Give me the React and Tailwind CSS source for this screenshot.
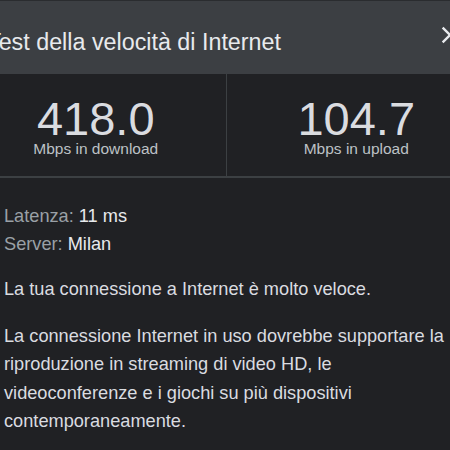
import React from "react";

const stats = [
  { value: "418.0", label: "Mbps in download" },
  { value: "104.7", label: "Mbps in upload" },
];

const CloseIcon = () => (
  <svg width="28" height="28" viewBox="0 0 24 24" fill="currentColor">
    <path d="M19 6.41L17.59 5 12 10.59 6.41 5 5 6.41 10.59 12 5 17.59 6.41 19 12 13.41 17.59 19 19 17.59 13.41 12z" />
  </svg>
);

const App = () => {
  return (
    <div
      className="w-[450px] h-[450px] overflow-hidden bg-[#202124]"
      style={{ fontFamily: '"Liberation Sans", Arial, sans-serif' }}
    >
      <div className="w-[520px] ml-[-34px]">
        {/* header */}
        <div className="h-[74px] flex justify-between bg-[#3c3f43] border-t border-[#2a2c2f] pl-[21px] pr-[22px]">
          <h1 className="mt-[27px] text-[23.3px] leading-[28px] text-[#e8eaed]">
            Test della velocità di Internet
          </h1>
          <div className="mt-[20px] text-[#e8eaed]">
            <CloseIcon />
          </div>
        </div>

        {/* results */}
        <div className="flex h-[104px] border-b-2 border-[#3c4043]">
          {stats.map((stat, index) => (
            <React.Fragment key={stat.label}>
              {index > 0 && <div className="w-px bg-[#3c4043]" />}
              <div className="flex-1 flex flex-col items-center pt-[24px]">
                <div className="text-[47px] leading-[42px] text-[#dadce0]">
                  {stat.value}
                </div>
                <div className="text-[15.5px] leading-[18px] text-[#bdc1c6]">
                  {stat.label}
                </div>
              </div>
            </React.Fragment>
          ))}
        </div>

        {/* details */}
        <div className="pl-[38px] pr-[38px] pt-[24px] text-[18.2px] leading-[28px] text-[#dadce0]">
          <div>
            <span className="text-[#9aa0a6]">Latenza: </span>
            <span className="text-[#e8eaed]">11 ms</span>
          </div>
          <div>
            <span className="text-[#9aa0a6]">Server: </span>
            <span className="text-[#e8eaed]">Milan</span>
          </div>
          <p className="mt-[17px]">
            La tua connessione a Internet è molto veloce.
          </p>
          <p className="mt-[19px] leading-[28.3px]">
            La connessione Internet in uso dovrebbe supportare la riproduzione
            in streaming di video HD, le videoconferenze e i giochi su più
            dispositivi contemporaneamente.
          </p>
        </div>
      </div>
    </div>
  );
};

export default App;
